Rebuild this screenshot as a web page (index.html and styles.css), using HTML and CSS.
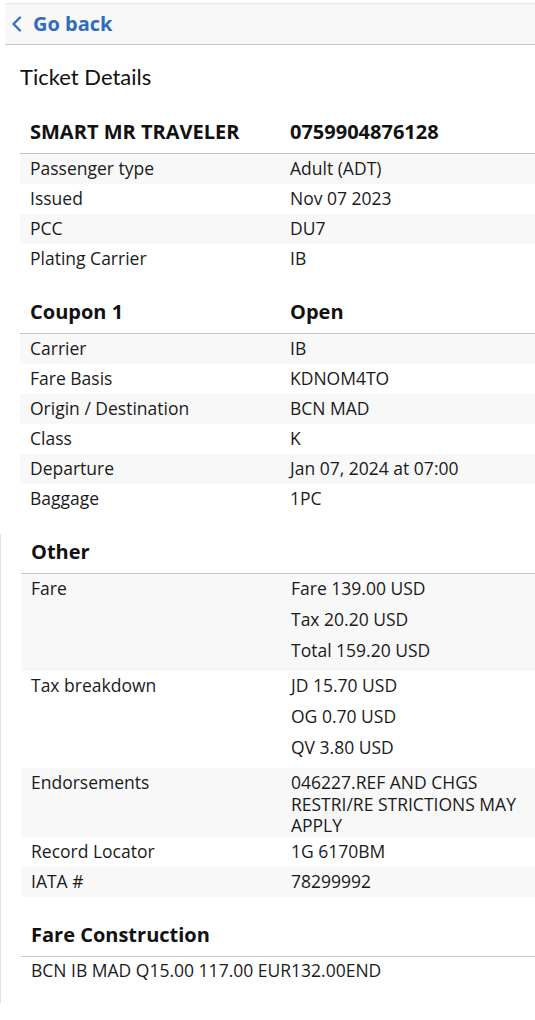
FILE: index.html
```html
<!DOCTYPE html>
<html lang="en">
<head>
<meta charset="utf-8">
<title>Ticket Details</title>
<link rel="stylesheet" href="styles.css">
</head>
<body>
<div class="topbar">
  <a class="back" href="#">
    <svg class="chev" width="12" height="16" viewBox="0 0 12 16"><path d="M9 1.5 L2.5 8 L9 14.5" fill="none" stroke="#2f6cbd" stroke-width="2.2" stroke-linecap="round" stroke-linejoin="round"/></svg>
    <span>Go back</span>
  </a>
</div>

<h1 class="title">Ticket Details</h1>

<section class="sec first">
  <div class="head"><div>SMART MR TRAVELER</div><div>0759904876128</div></div>
  <div class="row alt"><div>Passenger type</div><div>Adult (ADT)</div></div>
  <div class="row"><div>Issued</div><div>Nov 07 2023</div></div>
  <div class="row alt"><div>PCC</div><div>DU7</div></div>
  <div class="row"><div>Plating Carrier</div><div>IB</div></div>
</section>

<section class="sec">
  <div class="head"><div>Coupon 1</div><div>Open</div></div>
  <div class="row alt"><div>Carrier</div><div>IB</div></div>
  <div class="row"><div>Fare Basis</div><div>KDNOM4TO</div></div>
  <div class="row alt"><div>Origin / Destination</div><div>BCN MAD</div></div>
  <div class="row"><div>Class</div><div>K</div></div>
  <div class="row alt"><div>Departure</div><div>Jan 07, 2024 at 07:00</div></div>
  <div class="row"><div>Baggage</div><div>1PC</div></div>
</section>

<div class="bordered">
  <section class="sec">
    <div class="head"><div>Other</div><div></div></div>
    <div class="row alt"><div>Fare</div><div><div class="item">Fare 139.00 USD</div><div class="item">Tax 20.20 USD</div><div class="item">Total 159.20 USD</div></div></div>
    <div class="row"><div>Tax breakdown</div><div><div class="item">JD 15.70 USD</div><div class="item">OG 0.70 USD</div><div class="item">QV 3.80 USD</div></div></div>
    <div class="row alt"><div>Endorsements</div><div>046227.REF AND CHGS RESTRI/RE STRICTIONS MAY APPLY</div></div>
    <div class="row"><div>Record Locator</div><div>1G 6170BM</div></div>
    <div class="row alt"><div>IATA #</div><div>78299992</div></div>
  </section>

  <section class="sec fc">
    <div class="head single"><div>Fare Construction</div></div>
    <div class="text">BCN IB MAD Q15.00 117.00 EUR132.00END</div>
  </section>
</div>
</body>
</html>
```

FILE: styles.css
```css
html, body {
  margin: 0;
  padding: 0;
  background: #ffffff;
}

body {
  font-family: "Open Sans", "Noto Sans", sans-serif;
  color: #1b1b1b;
  font-size: 17.5px;
  line-height: 21.5px;
}

.topbar {
  margin: 3px 0 0 5px;
  height: 40px;
  background: #f8f8f8;
  border-top: 1px solid #e8e8e8;
  border-bottom: 1px solid #c4c4c4;
  display: flex;
  align-items: center;
  padding-left: 6px;
}

.back {
  display: flex;
  align-items: center;
  gap: 10px;
  color: #2f6cbd;
  text-decoration: none;
  font-weight: 700;
  font-size: 20px;
  line-height: 26px;
}

.chev {
  display: block;
}

.title {
  margin: 18px 0 0 20px;
  font-family: "Lato", "Open Sans", sans-serif;
  font-weight: 400;
  font-size: 22px;
  line-height: 28px;
  color: #111;
}

.sec {
  margin: 0 0 0 20px;
}

.sec.first {
  margin-top: 23px;
}

.head {
  display: grid;
  grid-template-columns: 260px 1fr;
  height: 40px;
  box-sizing: border-box;
  align-items: end;
  padding-bottom: 8px;
  border-bottom: 1px solid #c4c4c4;
  font-weight: 700;
  font-size: 20px;
  line-height: 26px;
  color: #111;
}

.head > div {
  padding-left: 10px;
}

.head.single {
  grid-template-columns: 1fr;
}

.sec + .sec .head {
  margin-top: 20px;
}

.row {
  display: grid;
  grid-template-columns: 260px 1fr;
  min-height: 30px;
  box-sizing: border-box;
  padding-top: 4px;
}

.row > div {
  padding: 0 10px;
}

.row.alt {
  background: #f8f8f8;
}

.item {
  height: 31px;
}

.bordered {
  margin-top: 20px;
  border-left: 1px solid #e2e2e2;
  padding-bottom: 22px;
}

.bordered .sec {
  margin-left: 20px;
}

.bordered .sec:first-child .head {
  margin-top: 0;
}

.bordered .fc .head {
  margin-top: 20px;
}

.fc .text {
  padding: 3px 10px 0;
}
```
